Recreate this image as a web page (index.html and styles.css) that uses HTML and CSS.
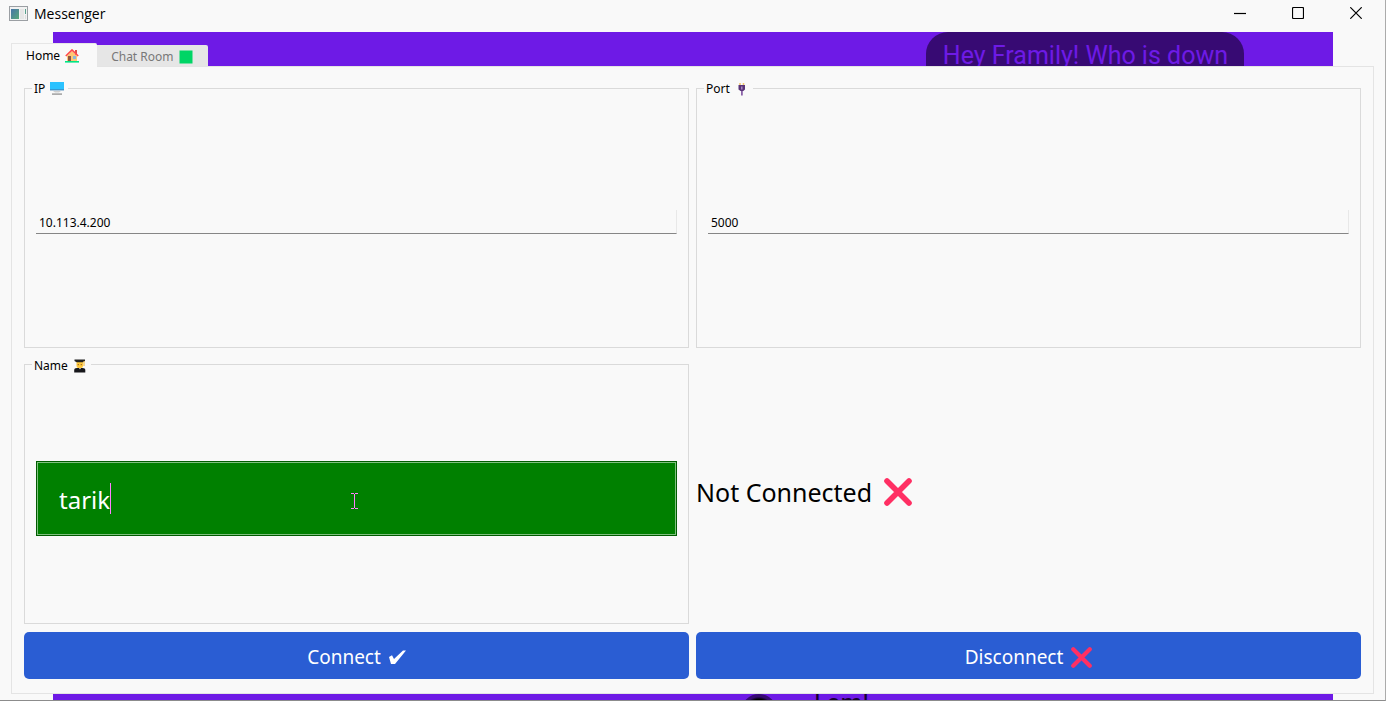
FILE: index.html
```html
<!DOCTYPE html>
<html lang="en">
<head>
<meta charset="utf-8">
<title>Messenger</title>
<link rel="stylesheet" href="styles.css">
</head>
<body>
<svg class="sprite" aria-hidden="true">
  <symbol id="cross" viewBox="0 0 28 28"><path d="M3 3L25 25M25 3L3 25" stroke="#ff2f63" stroke-width="5.6" stroke-linecap="round" fill="none"/></symbol>
</svg>
<div class="window">
  <header class="titlebar">
    <svg class="app-icon" viewBox="0 0 19 15" aria-hidden="true">
      <defs><linearGradient id="screen" x1="0" y1="0" x2="1" y2="1"><stop offset="0" stop-color="#4874a8"/><stop offset="1" stop-color="#58a878"/></linearGradient></defs>
      <rect x=".5" y=".5" width="18" height="14" fill="#f2f2f2" stroke="#9b9fa3"/>
      <rect x="2" y="3" width="8" height="10" fill="url(#screen)"/>
      <rect x="11" y="3" width="4" height="10" fill="#e6e6e6"/>
      <rect x="16" y="3" width="1" height="5" fill="#58a08c"/><rect x="16" y="9" width="1" height="4" fill="#dedede"/>
    </svg>
    <h1 class="title">Messenger</h1>
    <div class="controls">
      <button class="control" aria-label="Minimize"><svg viewBox="0 0 12 12"><path d="M0 6.5H12"/></svg></button>
      <button class="control" aria-label="Maximize"><svg viewBox="0 0 12 12"><rect x=".5" y=".5" width="11" height="11" rx="1"/></svg></button>
      <button class="control" aria-label="Close"><svg viewBox="0 0 12 12"><path d="M.3.3L11.7 11.7M11.7.3L.3 11.7"/></svg></button>
    </div>
  </header>
  <main class="stage">
    <div class="backdrop" aria-hidden="true">
      <div class="bubble">Hey Framily! Who is down</div>
      <div class="avatar"></div>
      <div class="reply">I am!</div>
    </div>
    <div class="tabs" role="tablist">
      <button class="tab tab-active" role="tab" aria-selected="true">Home
        <svg class="emoji" viewBox="0 0 14 14" aria-hidden="true"><rect x="10" y="1" width="2" height="5" fill="#d94f45"/><path d="M2 7L7 2L12 7V12H2Z" fill="#ffc873"/><path d="M.8 7L7 1L13.2 7" fill="none" stroke="#ff4b4b" stroke-width="1.7"/><rect x="3" y="7" width="3" height="5" fill="#8c5543"/><rect x="8" y="7" width="3" height="3" fill="#8ab8d8"/><rect x="0" y="12" width="14" height="1.6" fill="#00e585"/></svg>
      </button>
      <button class="tab" role="tab" aria-selected="false">Chat Room
        <svg class="emoji" viewBox="0 0 14 14" aria-hidden="true"><rect x=".5" y=".5" width="13" height="13" fill="#00d565"/></svg>
      </button>
    </div>
    <form class="pane" role="tabpanel">
      <fieldset class="group">
        <legend class="legend"><label for="ip">IP</label>
          <svg class="emoji" viewBox="0 0 14 14" aria-hidden="true"><rect x="0" y="0" width="14" height="8" fill="#2bc2ff"/><rect x="0" y="7.4" width="14" height="1" fill="#3c7fb5"/><path d="M3 9H11L9 10.5H5Z" fill="#cfcfcf"/><rect x="2" y="11.4" width="10" height="1.4" fill="#999"/></svg>
        </legend>
        <input class="line-input" id="ip" type="text" value="10.113.4.200">
      </fieldset>
      <fieldset class="group">
        <legend class="legend"><label for="port">Port</label>
          <svg class="emoji" viewBox="0 0 14 14" aria-hidden="true"><path d="M5 1V4M8.5 1V4" stroke="#f0c870" stroke-width="1.6"/><path d="M3.5 3H10V7.5L8.3 9H5.5L3.5 7.5Z" fill="#593478"/><rect x="6" y="4.5" width="1.5" height="3" fill="#a788c0"/><rect x="6" y="9" width="1.8" height="4.5" fill="#8a62a8"/></svg>
        </legend>
        <input class="line-input" id="port" type="text" value="5000">
      </fieldset>
      <fieldset class="group">
        <legend class="legend"><label for="name">Name</label>
          <svg class="emoji" viewBox="0 0 14 14" aria-hidden="true"><rect x="3.5" y="2" width="6.5" height="7" rx="2" fill="#ffc93c"/><path d="M1.5 .5H12V2L10 3.2H3.5L1.5 2Z" fill="#222"/><path d="M11 2V7" stroke="#f2b52e"/><path d="M4.7 5.7H5.9M7.7 5.7H8.9" stroke="#875025"/><path d="M1.2 13.5V11Q1.2 9 4 9H9.5Q12.3 9 12.3 11V13.5Z" fill="#17171b"/><path d="M6 9H8L7 10.4Z" fill="#ededed"/></svg>
        </legend>
        <div class="name-field">
          <input class="name-input" id="name" type="text" value="tarik">
          <span class="caret"></span>
          <svg class="pointer" viewBox="0 0 7 16" aria-hidden="true"><path d="M0 .5H3M4 .5H7M3.5 1V15M0 15.5H3M4 15.5H7"/></svg>
        </div>
      </fieldset>
      <output class="status">Not Connected <svg class="status-icon" aria-hidden="true"><use href="#cross"/></svg></output>
      <button class="action" type="button">Connect
        <svg class="check-icon" viewBox="0 0 17 15" aria-hidden="true"><path d="M0 7L3 5.2L5 9L14 .5H17L6 14H2Z" fill="#fff"/></svg>
      </button>
      <button class="action" type="button">Disconnect
        <svg class="action-icon" aria-hidden="true"><use href="#cross"/></svg>
      </button>
    </form>
  </main>
</div>
</body>
</html>
```
FILE: styles.css
```css
* { box-sizing: border-box; }

body {
  margin: 0;
  background: #f9f9f9;
  color: #000;
  font: 12px/16px "Noto Sans", sans-serif;
}

button, input { font: inherit; color: inherit; margin: 0; }
button { border: 0; background: none; padding: 0; }
svg { display: block; flex: none; }
.sprite { position: absolute; width: 0; height: 0; }

.window {
  display: flex;
  flex-direction: column;
  min-height: 100vh;
  border-right: 1px solid #ababab;
  border-bottom: 1px solid #8c8c8c;
}

.titlebar {
  display: flex;
  align-items: center;
  height: 32px;
  padding-left: 9px;
}
.app-icon { width: 19px; height: 15px; margin-bottom: 6px; }
.title {
  margin: 0 0 4px 6px;
  font: 14px/20px "Open Sans", sans-serif;
}
.controls { display: flex; margin: 0 0 6px auto; }
.control { display: grid; place-items: center; width: 58px; height: 26px; }
.control svg { width: 12px; height: 12px; fill: none; stroke: #000; stroke-width: 1.2; }

.stage {
  position: relative;
  display: flex;
  flex: 1;
  flex-direction: column;
  padding: 11px 11px 6px;
}

.backdrop {
  position: absolute;
  inset: 0 52px 0 53px;
  overflow: hidden;
  background: #6e1ae6;
}
.bubble {
  position: absolute;
  top: 0;
  right: 89px;
  height: 60px;
  padding: 8px 16px 8px 17px;
  border-radius: 22px;
  background: #370a73;
  color: #6e1ae6;
  font: 25px/32px Roboto, sans-serif;
  white-space: nowrap;
}
.avatar {
  position: absolute;
  left: 688px;
  bottom: -30px;
  width: 36px;
  height: 36px;
  border-radius: 50%;
  background: radial-gradient(circle, #000 50%, #370a73 60%);
}
.reply {
  position: absolute;
  left: 761px;
  bottom: -20px;
  color: #170033;
  font: 25px/32px Roboto, sans-serif;
}

.tabs { position: relative; z-index: 1; display: flex; align-items: flex-end; height: 23px; }
.tab {
  display: flex;
  align-items: center;
  gap: 5px;
  height: 21px;
  padding: 2px 15px 0 14px;
  border-radius: 0 2px 0 0;
  background: #e6e6e6;
  color: #787878;
}
.tab-active {
  align-self: flex-start;
  height: 24px;
  padding: 0 18px 0 14px;
  border: 1px solid #e6e6e6;
  border-width: 1px 0 0 1px;
  background: #f9f9f9;
  color: #000;
}
.emoji { width: 14px; height: 14px; }

.pane {
  position: relative;
  display: grid;
  flex: 1;
  grid-template: 1fr 1fr 47px / 1fr 1fr;
  gap: 8px 7px;
  padding: 12px 12px 14px;
  border: 1px solid #e4e4e4;
  background: #f9f9f9;
}

.group {
  display: flex;
  align-items: center;
  min-width: 0;
  margin: 0;
  padding: 0 11px;
  border: 1px solid #dadada;
}
.legend {
  display: flex;
  align-items: center;
  gap: 5px;
  margin-left: -4px;
  padding: 2px 4px 0 2px;
}

.line-input {
  width: 100%;
  height: 24px;
  padding: 2px 3px 0;
  border: solid;
  border-width: 0 1px 1px 0;
  border-color: #e8e8e8 #e8e8e8 #868686;
  background: transparent;
  outline: 0;
}

.name-field { position: relative; width: 100%; }
.name-input {
  display: block;
  width: 100%;
  height: 75px;
  padding: 2px 22px 0;
  border: 1px solid #005c00;
  background: #008000;
  box-shadow: inset 0 0 0 1px #80c080;
  color: #fff;
  font-size: 24px;
  outline: 0;
}
.caret { position: absolute; left: 74px; top: 22px; width: 1px; height: 31px; background: #ff7fff; }
.pointer { position: absolute; left: 315px; top: 32px; width: 7px; height: 16px; fill: none; stroke: #ff7fff; }

.status { display: flex; align-items: center; gap: 12px; padding-top: 4px; font-size: 25px; line-height: 36px; }
.status-icon { width: 28px; height: 28px; }

.action {
  display: flex;
  align-items: center;
  justify-content: center;
  gap: 8px;
  padding-top: 3px;
  border-radius: 5px;
  background: #2a5dd3;
  color: #fff;
  font-size: 19px;
}
.check-icon { width: 17px; height: 15px; }
.action-icon { width: 21px; height: 21px; }
```
